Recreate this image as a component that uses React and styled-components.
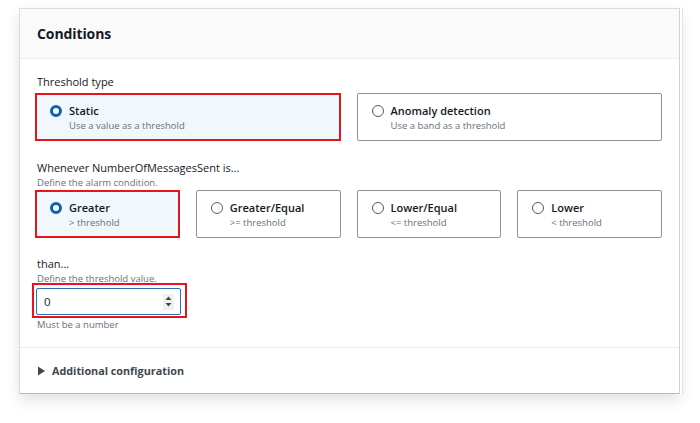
import React from "react";
import styled, { createGlobalStyle } from "styled-components";

const Global = createGlobalStyle`
  html, body { margin: 0; padding: 0; background: #ffffff; }
  body { font-family: "Open Sans", "Liberation Sans", sans-serif; color: #16191f; }
  * { box-sizing: border-box; }
`;

const Page = styled.div`
  width: 700px;
  height: 423px;
  padding: 8px 20px 0 19px;
`;

const Card = styled.section`
  background: #fff;
  border: 1px solid #dcdcdc;
  border-bottom-color: #b9bcbf;
  border-right-color: #cfd2d4;
  box-shadow: 2px 0 0 0 #ffffff, 3px 0 0 0 #e4e4e4, 0 6px 14px rgba(0, 0, 0, 0.12);
  height: 386px;
  display: flex;
  flex-direction: column;
  overflow: hidden;
`;

const Header = styled.header`
  background: #fafafa;
  border-bottom: 1px solid #eaeded;
  height: 50px;
  flex: none;
  padding: 0 17px;
  display: flex;
  align-items: center;
`;

const Title = styled.h2`
  margin: 0;
  font-size: 14px;
  font-weight: 700;
  letter-spacing: -0.1px;
`;

const Body = styled.div`
  padding: 15px 17px 0 15px;
  display: flex;
  flex-direction: column;
`;

const Field = styled.div`
  display: flex;
  flex-direction: column;
  margin-bottom: ${(p) => p.$mb || 0}px;
`;

const Label = styled.div`
  font-size: 11px;
  line-height: 15px;
  padding-left: 2px;
  margin-bottom: ${(p) => (p.$tight ? 0 : 4)}px;
`;

const Desc = styled.div`
  font-size: 9.5px;
  line-height: 13px;
  margin-top: 1px;
  color: #687078;
  padding-left: 2px;
`;

const TileGrid = styled.div`
  display: grid;
  grid-template-columns: repeat(${(p) => p.$cols}, 1fr);
  column-gap: 16px;
  margin-top: ${(p) => p.$mt || 0}px;
`;

const Tile = styled.div`
  height: 48px;
  border: ${(p) => (p.$selected ? "2px solid #e8141c" : "1px solid #8d9396")};
  border-radius: ${(p) => (p.$selected ? "0" : "2px")};
  background: ${(p) => (p.$selected ? "#f1f8fd" : "#fff")};
  padding: ${(p) => (p.$selected ? "8px 12px 0 13px" : "9px 13px 0 14px")};
  display: flex;
  gap: 7px;
`;

const Radio = styled.span`
  width: 12px;
  height: 12px;
  margin-top: 2px;
  border-radius: 50%;
  flex: none;
  border: ${(p) => (p.$on ? "3.5px solid #0f61ad" : "1px solid #545b64")};
  background: #fff;
`;

const TileText = styled.div`
  display: flex;
  flex-direction: column;
`;

const TileTitle = styled.div`
  font-size: 11px;
  font-weight: 600;
  line-height: 15px;
`;

const TileDesc = styled.div`
  font-size: 9.5px;
  line-height: 14px;
  color: #687078;
  margin-top: 1px;
`;

const InputOutline = styled.div`
  width: 155px;
  height: 35px;
  border: 2px solid #e8141c;
  margin: -2px 0 0 -3px;
  padding: 3px 4px 1px 2px;
`;

const InputBox = styled.div`
  height: 27px;
  border: 1.5px solid #2f6dbd;
  border-radius: 2px;
  background: #fff;
  display: flex;
  align-items: center;
  justify-content: space-between;
  padding: 0 6px 0 7px;
`;

const InputValue = styled.span`
  font-size: 11.5px;
`;

const Spinner = styled.span`
  width: 11px;
  height: 16px;
  background: #f0f0f0;
  display: flex;
  align-items: center;
  justify-content: center;
`;

const Hint = styled.div`
  font-size: 9.5px;
  color: #687078;
  line-height: 13px;
  margin-top: 0;
  padding-left: 2px;
`;

const Divider = styled.div`
  border-top: 1px solid #eaeded;
  margin-top: 16px;
`;

const Expand = styled.div`
  height: 45px;
  flex: none;
  padding-left: 17px;
  display: flex;
  align-items: center;
  gap: 6px;
  font-size: 10.8px;
  font-weight: 700;
  color: #414750;
`;

const Caret = () => (
  <svg width="9" height="10" viewBox="0 0 9 10">
    <path d="M1 0.5 L8 5 L1 9.5 Z" fill="#414750" />
  </svg>
);

const SpinIcon = () => (
  <svg width="7" height="11" viewBox="0 0 7 11">
    <path d="M3.5 0.5 L6.5 4 L0.5 4 Z M3.5 10.5 L6.5 7 L0.5 7 Z" fill="#414750" />
  </svg>
);

const OptionTile = ({ title, desc, selected }) => (
  <Tile $selected={selected}>
    <Radio $on={selected} />
    <TileText>
      <TileTitle>{title}</TileTitle>
      <TileDesc>{desc}</TileDesc>
    </TileText>
  </Tile>
);

const operators = [
  { title: "Greater", desc: "> threshold", selected: true },
  { title: "Greater/Equal", desc: ">= threshold" },
  { title: "Lower/Equal", desc: "<= threshold" },
  { title: "Lower", desc: "< threshold" },
];

export default function App() {
  return (
    <>
      <Global />
      <Page>
        <Card>
          <Header>
            <Title>Conditions</Title>
          </Header>
          <Body>
            <Field $mb={19}>
              <Label>Threshold type</Label>
              <TileGrid $cols={2}>
                <OptionTile title="Static" desc="Use a value as a threshold" selected />
                <OptionTile title="Anomaly detection" desc="Use a band as a threshold" />
              </TileGrid>
            </Field>
            <Field $mb={18}>
              <Label $tight>Whenever NumberOfMessagesSent is...</Label>
              <Desc>Define the alarm condition.</Desc>
              <TileGrid $cols={4} $mt={1}>
                {operators.map((o) => (
                  <OptionTile key={o.title} {...o} />
                ))}
              </TileGrid>
            </Field>
            <Field>
              <Label $tight>than...</Label>
              <Desc>Define the threshold value.</Desc>
              <InputOutline>
                <InputBox>
                  <InputValue>0</InputValue>
                  <Spinner>
                    <SpinIcon />
                  </Spinner>
                </InputBox>
              </InputOutline>
              <Hint>Must be a number</Hint>
            </Field>
          </Body>
          <Divider />
          <Expand>
            <Caret />
            Additional configuration
          </Expand>
        </Card>
      </Page>
    </>
  );
}
